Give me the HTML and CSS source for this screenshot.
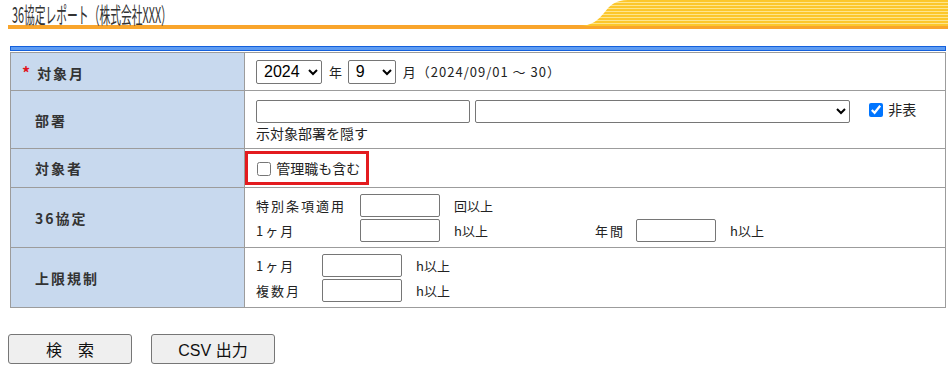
FILE: index.html
```html
<!DOCTYPE html>
<html lang="ja">
<head>
    <meta charset="UTF-8">
    <title>36協定レポート</title>
    <link rel="stylesheet" href="styles.css">
</head>
<body>
<div class="page-head">
    <h1 class="page-title"><span>36協定レポート（株式会社XXX）</span></h1>
    <svg class="head-wave" width="370" height="26" viewBox="0 0 370 26">
        <defs>
            <pattern id="stripes" width="4" height="3" patternUnits="userSpaceOnUse">
                <rect x="0" y="0" width="4" height="2" fill="#fcc72c"/>
                <rect x="0" y="2" width="4" height="1" fill="#fee58e"/>
            </pattern>
        </defs>
        <path d="M0 26 C14 26 20 20 26 13 C32 5 38 0 50 0 L370 0 L370 26 Z" fill="url(#stripes)"/>
    </svg>
</div>

<div class="blue-bar"></div>

<table class="search-table">
    <tr class="row-month">
        <th><span class="req">*</span>対象月</th>
        <td>
            <select class="sel-year"><option>2024</option></select>
            <span class="unit">年</span>
            <select class="sel-month"><option>9</option></select>
            <span class="unit period">月（2024/09/01 ～ 30）</span>
        </td>
    </tr>
    <tr class="row-dept">
        <th>部署</th>
        <td class="dept-cell">
            <input type="text" class="dept-code"><select class="dept-select"><option></option></select><label class="hide-check"><input type="checkbox" checked> 非表示対象部署を隠す</label>
        </td>
    </tr>
    <tr class="row-target">
        <th>対象者</th>
        <td class="target-cell">
            <label class="marked"><input type="checkbox"> 管理職も含む</label>
        </td>
    </tr>
    <tr class="row-36">
        <th>36協定</th>
        <td>
            <div class="line">
                <span class="cap cap-wide">特別条項適用</span>
                <input type="text" class="num">
                <span class="after">回以上</span>
            </div>
            <div class="line">
                <span class="cap cap-wide">1ヶ月</span>
                <input type="text" class="num">
                <span class="after after-gap">h以上</span>
                <span class="cap cap-year">年間</span>
                <input type="text" class="num">
                <span class="after">h以上</span>
            </div>
        </td>
    </tr>
    <tr class="row-limit">
        <th>上限規制</th>
        <td>
            <div class="line">
                <span class="cap cap-short">1ヶ月</span>
                <input type="text" class="num">
                <span class="after">h以上</span>
            </div>
            <div class="line">
                <span class="cap cap-short">複数月</span>
                <input type="text" class="num">
                <span class="after">h以上</span>
            </div>
        </td>
    </tr>
</table>

<div class="buttons">
    <button type="button">検　索</button>
    <button type="button">CSV 出力</button>
</div>
</body>
</html>
```

FILE: styles.css
```css
body {
    margin: 0 0 0 8px;
    font-family: "Noto Sans CJK JP", "Liberation Sans", sans-serif;
    font-size: 14px;
    color: #333;
    background: #fff;
}

/* ヘッダー */
.page-head {
    position: relative;
    height: 25px;
    border-bottom: 4px solid #f9a52c;
}
.page-title {
    margin: 0;
    padding: 0 0 0 4px;
    font-size: 22px;
    font-weight: normal;
    line-height: 26px;
    color: #333;
    white-space: nowrap;
}
.page-title span {
    display: inline-block;
    transform: scaleX(0.49);
    transform-origin: left center;
}
.head-wave {
    position: absolute;
    right: 0;
    top: 0;
}

.blue-bar {
    margin: 17px 2px 1px 2px;
    height: 3px;
    border: 1px solid #1460dc;
    background: #5e9cf2;
}

/* 検索テーブル */
.search-table {
    margin-left: 2px;
    width: 936px;
    border-collapse: collapse;
}
.search-table th,
.search-table td {
    border: 1px solid #9c9c9c;
    vertical-align: middle;
}
.search-table th {
    width: 209px;
    padding: 0 0 0 24px;
    text-align: left;
    background-color: #c8d9ee;
    font-weight: bold;
    letter-spacing: 2px;
    color: #333;
}
.search-table td {
    padding: 0 20px 0 11px;
    font-size: 13px;
    color: #222;
}
.row-month { height: 38px; }
.row-dept { height: 58px; }
.row-target { height: 39px; }
.row-36 { height: 60px; }
.row-limit { height: 60px; }

.search-table .row-month th { padding-left: 11px; }
.req {
    color: #e0141e;
    font-size: 16px;
    margin-right: 5px;
}

select, input[type="text"] {
    box-sizing: border-box;
    height: 23px;
    border: 1px solid #767676;
    border-radius: 2px;
    background: #fff;
    vertical-align: middle;
    margin: 0;
}
select {
    font-family: "Liberation Sans", Arial, sans-serif;
    font-size: 16px;
    color: #000;
    padding: 0 0 0 3px;
}
.sel-year { width: 66px; height: 24px; }
.sel-month { width: 48px; height: 24px; }
.unit {
    margin: 0 3px 0 4px;
    vertical-align: middle;
}
.period { letter-spacing: 1px; }

.search-table .dept-cell { line-height: 20px; padding-top: 4px; }
.dept-code { width: 214px; }
.dept-select { width: 375px; margin-left: 5px; }
.hide-check { margin-left: 19px; font-size: 14px; }
input[type="checkbox"] {
    width: 14px;
    height: 14px;
    margin: 0 2px 0 0;
    vertical-align: -2px;
}

.search-table .target-cell { padding-left: 0; }
.marked {
    display: inline-block;
    border: 3px solid #e31b1f;
    padding: 4px 6px 4px 9px;
    font-size: 14px;
    line-height: 20px;
}

.line {
    display: flex;
    align-items: center;
    height: 25px;
}
.cap { letter-spacing: 2px; }
.cap-wide { width: 104px; }
.cap-short { width: 66px; }
.cap-year { width: 41px; }
.num { width: 80px; }
.after { margin-left: 14px; }
.after-gap { width: 141px; }

/* ボタン */
.buttons {
    display: flex;
    gap: 19px;
    margin-top: 26px;
}
.buttons button {
    width: 124px;
    height: 30px;
    background-color: #efefef;
    border: 1px solid #767676;
    border-radius: 3px;
    font-family: "Liberation Sans", "Noto Sans CJK JP", sans-serif;
    font-size: 16px;
    color: #111;
    padding: 0;
}
```
